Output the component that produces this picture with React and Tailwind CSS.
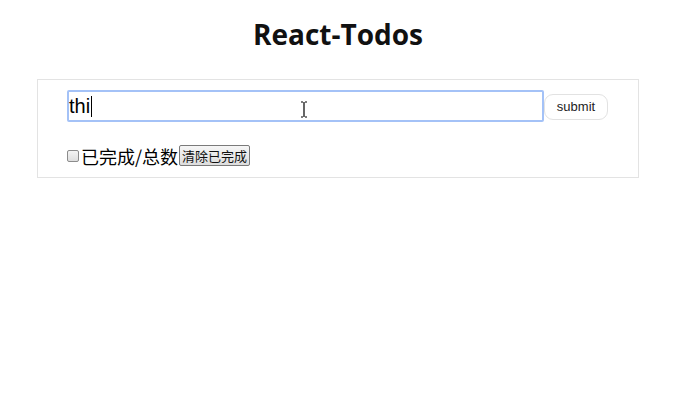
export default function App() {
  return (
    <div className="relative h-[408px] w-[690px] bg-white font-['Liberation_Sans',sans-serif] text-black">
      <div className="ml-[37px] w-[602px]">
        <h1 className="pt-[14px] text-center font-['Open_Sans',sans-serif] text-[28px] font-bold leading-[40px] text-[#111]">
          React-Todos
        </h1>
        <div className="mt-[25px] h-[99px] border border-[#e3e3e3] bg-white pl-[29px] pt-[10px]">
          <div className="flex items-start">
            <div className="flex h-[32px] w-[477px] items-center rounded-[2px] border-2 border-[#a4c2f7] text-[20px] leading-none">
              <span>thi</span>
              <span className="ml-[1px] inline-block h-[21px] w-[1px] bg-black"></span>
            </div>
            <button className="mt-[4px] flex h-[26px] w-[64px] items-center justify-center rounded-[9px] border border-[#e2e2e2] bg-white text-[13px] text-[#222]">
              submit
            </button>
          </div>
          <div className="mt-[23px] flex items-center">
            <span className="inline-block h-[12px] w-[12px] rounded-[2px] border border-[#8c8c8c] bg-[linear-gradient(#f4f4f4,#dedede)]"></span>
            <span className="ml-[2px] font-['Noto_Sans_CJK_SC',sans-serif] text-[18px] leading-none">已完成/总数</span>
            <button className="ml-[1px] flex h-[21px] items-center rounded-[2px] border border-[#7a7a7a] bg-[linear-gradient(#f6f6f6,#dddddd)] px-[2px] font-['Noto_Sans_CJK_SC',sans-serif] text-[13px] leading-none text-[#111]">
              清除已完成
            </button>
          </div>
        </div>
      </div>
      <svg className="absolute left-[299px] top-[101px]" width="10" height="17" viewBox="0 0 10 17">
        <path d="M2 1h2M6 1h2M5 1v15M2 16h2M6 16h2" stroke="#000" strokeWidth="1.2" fill="none" />
      </svg>
    </div>
  );
}
